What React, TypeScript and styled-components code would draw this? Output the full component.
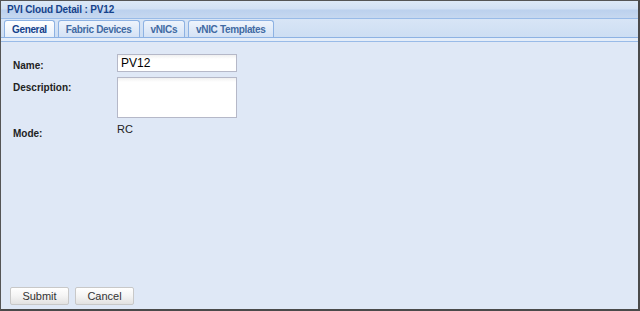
import React from 'react';
import styled, { createGlobalStyle } from 'styled-components';

const GlobalStyle = createGlobalStyle`
    html, body {
        margin: 0;
        padding: 0;
        background: #dfe8f6;
    }
    * {
        box-sizing: border-box;
    }
`;

const Window = styled.div`
    width: 640px;
    height: 311px;
    display: flex;
    flex-direction: column;
    border-top: 1px solid #555;
    border-left: 1px solid #555;
    border-right: 2px solid #4a4a4a;
    border-bottom: 2px solid #4a4a4a;
    background: #dfe8f6;
    font-family: 'Liberation Sans', Arial, sans-serif;
`;

const Header = styled.div`
    height: 18px;
    padding: 0 6px;
    display: flex;
    align-items: center;
    background: linear-gradient(to bottom, #dde9f7 0%, #d2e1f4 45%, #bcd1ee 55%, #c6d8f0 100%);
    border-bottom: 1px solid #99bbe8;
    color: #15428b;
    font-size: 10px;
    font-weight: bold;
    letter-spacing: -0.15px;
`;

const TabStrip = styled.div`
    display: flex;
    align-items: flex-end;
    gap: 3px;
    height: 19px;
    padding: 0 0 0 3px;
    background: linear-gradient(to bottom, #d8e5f6, #cddef3);
    border-bottom: 1px solid #8db2e3;
`;

const Tab = styled.div<{ $active?: boolean }>`
    height: 17px;
    padding: 0 7px;
    display: flex;
    align-items: center;
    border: 1px solid #8db2e3;
    border-bottom: none;
    border-radius: 3px 3px 0 0;
    background: ${(p) =>
        p.$active
            ? 'linear-gradient(to bottom, #ffffff, #e6effa)'
            : 'linear-gradient(to bottom, #eef4fc, #d4e2f5)'};
    color: ${(p) => (p.$active ? '#15428b' : '#416aa3')};
    font-size: 10px;
    font-weight: bold;
    letter-spacing: -0.35px;
    white-space: nowrap;
`;

const TabBand = styled.div`
    height: 4px;
    background: #e4edf9;
    border-bottom: 1px solid #99bbe8;
`;

const Body = styled.div`
    flex: 1;
    display: flex;
    flex-direction: column;
    justify-content: space-between;
    padding: 12px 12px 4px 9px;
`;

const Form = styled.div`
    display: grid;
    grid-template-columns: 104px 120px;
    row-gap: 5px;
    padding-left: 3px;
`;

const Label = styled.label<{ $pt?: number }>`
    font-size: 10px;
    font-weight: bold;
    color: #222;
    padding-top: ${(p) => p.$pt ?? 5}px;
`;

const TextInput = styled.div<{ $tall?: boolean }>`
    height: ${(p) => (p.$tall ? 41 : 18)}px;
    border: 1px solid #b5b8c8;
    background: linear-gradient(to bottom, #f0f0f0 0px, #ffffff 4px);
    padding: 1px 3px;
    font-size: 12px;
    color: #000;
`;

const Value = styled.div`
    font-size: 11px;
    color: #222;
`;

const Footer = styled.div`
    display: flex;
    gap: 6px;
`;

const Button = styled.div`
    width: 59px;
    height: 18px;
    display: flex;
    align-items: center;
    justify-content: center;
    border: 1px solid #c8c8c8;
    border-radius: 2px;
    background: linear-gradient(to bottom, #ffffff 0%, #f4f4f4 50%, #e2e2e2 100%);
    font-size: 11px;
    color: #333;
`;

const tabs = ['General', 'Fabric Devices', 'vNICs', 'vNIC Templates'];

export default function App() {
    return (
        <>
            <GlobalStyle />
            <Window>
                <Header>PVI Cloud Detail : PV12</Header>
                <TabStrip>
                    {tabs.map((t, i) => (
                        <Tab key={t} $active={i === 0}>
                            {t}
                        </Tab>
                    ))}
                </TabStrip>
                <TabBand />
                <Body>
                    <Form>
                        <Label $pt={6}>Name:</Label>
                        <TextInput>PV12</TextInput>
                        <Label $pt={5}>Description:</Label>
                        <TextInput $tall />
                        <Label $pt={5}>Mode:</Label>
                        <Value>RC</Value>
                    </Form>
                    <Footer>
                        <Button>Submit</Button>
                        <Button>Cancel</Button>
                    </Footer>
                </Body>
            </Window>
        </>
    );
}
